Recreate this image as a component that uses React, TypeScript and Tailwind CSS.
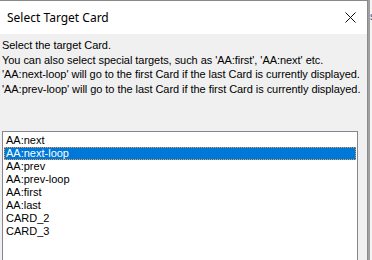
const items = ["AA:next", "AA:next-loop", "AA:prev", "AA:prev-loop", "AA:first", "AA:last", "CARD_2", "CARD_3"]

export default function App() {
    const selected = "AA:next-loop"

    return (
        <div className="flex w-[372px] h-[260px] overflow-hidden bg-[#f0f0f0]" style={{ fontFamily: "Tahoma, 'Liberation Sans', 'DejaVu Sans', sans-serif" }}>
            <div className="flex flex-col w-[368px] h-full border-t border-r border-[#8a8a8a] shrink-0">
                {/* title bar */}
                <div className="flex items-center justify-between h-[33px] bg-white pl-[7px] pr-[10px] shrink-0">
                    <span className="text-[12px] text-black" style={{ fontFamily: "'Noto Sans', 'Liberation Sans', sans-serif" }}>Select Target Card</span>
                    <svg width="11" height="11" viewBox="0 0 11 11" className="mr-[1px]">
                        <path d="M0.5 0.5 L10.5 10.5 M10.5 0.5 L0.5 10.5" stroke="#111" strokeWidth="1" fill="none" />
                    </svg>
                </div>

                {/* body */}
                <div className="flex flex-col flex-1 bg-[#f0f0f0] px-[2px] pt-[4px]">
                    <div className="text-[11px] leading-[14.6px] text-black tracking-[-0.05px] whitespace-nowrap">
                        <div>Select the target Card.</div>
                        <div>You can also select special targets, such as 'AA:first', 'AA:next' etc.</div>
                        <div>'AA:next-loop' will go to the first Card if the last Card is currently displayed.</div>
                        <div>'AA:prev-loop' will go to the last Card if the first Card is currently displayed.</div>
                    </div>

                    <div className="mt-[35px] w-[356px] flex-1 bg-white border border-[#828790] border-b-0 pt-[2px] px-[1px]">
                        {items.map(it => (
                            <div
                                key={it}
                                className={`h-[13px] leading-[13px] text-[11px] pl-[2px] ${it === selected ? "bg-[#0078d7] text-white outline outline-1 outline-dotted outline-[#f79a3d] -outline-offset-1" : "text-black"}`}
                            >
                                {it}
                            </div>
                        ))}
                    </div>
                </div>
            </div>

            {/* window behind */}
            <div className="flex-1 h-full flex">
                <div className="w-[2px] h-full bg-[#a0a0a0]" />
                <div className="flex-1 h-full bg-[#f3f3f3] pt-[9px] text-[10px] text-[#1a3b8a] overflow-hidden">s</div>
            </div>
        </div>
    )
}
